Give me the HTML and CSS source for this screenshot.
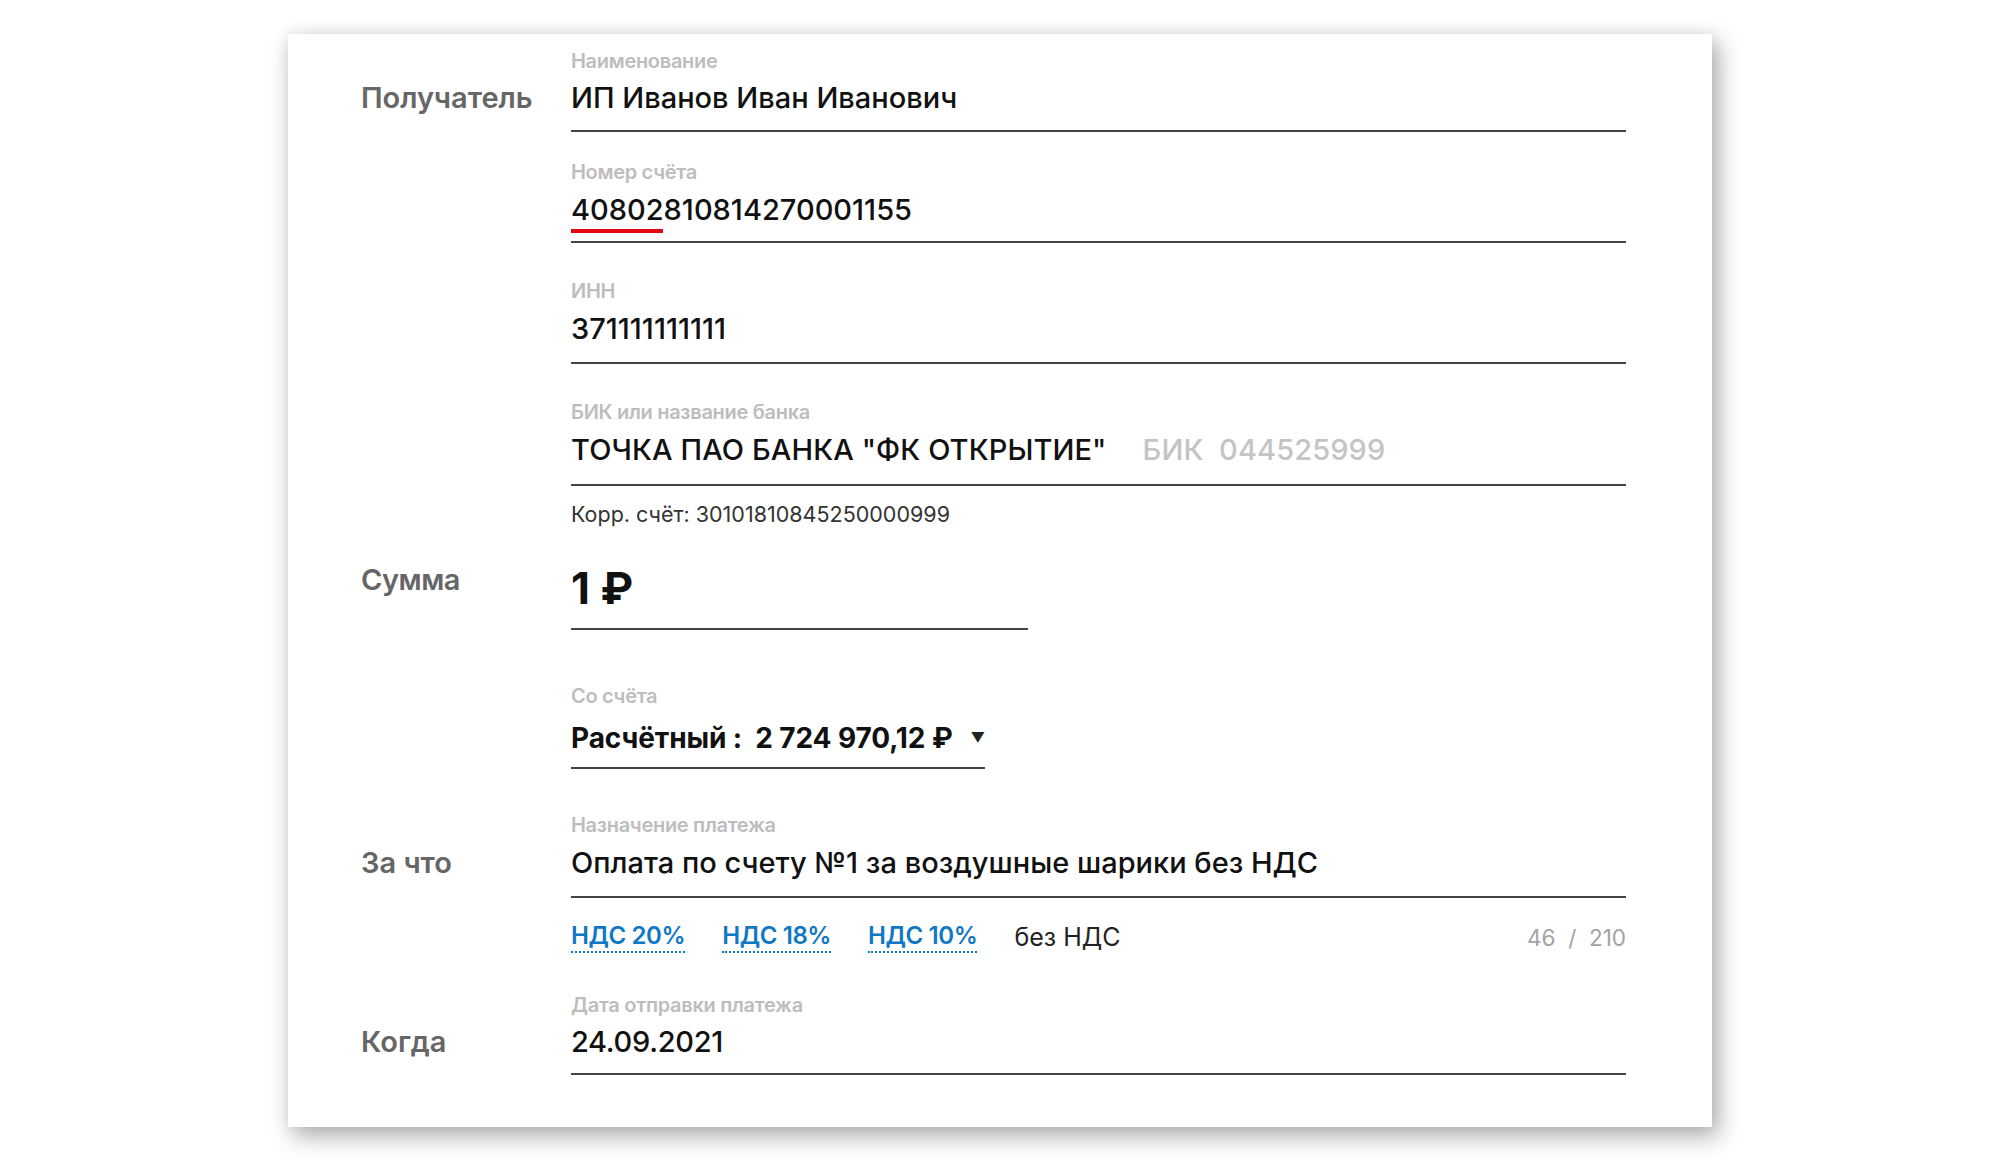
FILE: index.html
```html
<!DOCTYPE html>
<html lang="ru">
<head>
<meta charset="utf-8">
<title>Платёж</title>
<link rel="stylesheet" href="styles.css">
</head>
<body>
<div class="card">
  <div class="row row-recipient">
    <div class="side side-first">Получатель</div>
    <div class="fields">
      <div class="field f1">
        <div class="cap">Наименование</div>
        <div class="val">ИП Иванов Иван Иванович</div>
      </div>
      <div class="field f2">
        <div class="cap">Номер счёта</div>
        <div class="val val-acc">40802810814270001155<span class="err"></span></div>
      </div>
      <div class="field f3">
        <div class="cap">ИНН</div>
        <div class="val">371111111111</div>
      </div>
      <div class="field f4">
        <div class="cap">БИК или название банка</div>
        <div class="val">ТОЧКА ПАО БАНКА "ФК ОТКРЫТИЕ"<span class="bik">БИК&nbsp; 044525999</span></div>
      </div>
      <div class="korr">Корр. счёт: 30101810845250000999</div>
    </div>
  </div>

  <div class="row row-sum">
    <div class="side">Сумма</div>
    <div class="fields">
      <div class="field amount">
        <div class="val-big">1 ₽</div>
      </div>
      <div class="field from">
        <div class="cap">Со счёта</div>
        <div class="val val-from"><span>Расчётный :&nbsp; 2 724 970,12 ₽</span><span class="arrow">▼</span></div>
      </div>
    </div>
  </div>

  <div class="row row-purpose">
    <div class="side side-cap">За что</div>
    <div class="fields">
      <div class="field f-purpose">
        <div class="cap">Назначение платежа</div>
        <div class="val">Оплата по счету №1 за воздушные шарики без НДС</div>
      </div>
      <div class="vat">
        <div class="vat-opts">
          <a class="vat-link">НДС 20%</a>
          <a class="vat-link">НДС 18%</a>
          <a class="vat-link">НДС 10%</a>
          <span class="vat-none">без НДС</span>
        </div>
        <div class="counter">46&nbsp; /&nbsp; 210</div>
      </div>
    </div>
  </div>

  <div class="row row-date">
    <div class="side side-cap">Когда</div>
    <div class="fields">
      <div class="field f-date">
        <div class="cap">Дата отправки платежа</div>
        <div class="val">24.09.2021</div>
      </div>
    </div>
  </div>
</div>
</body>
</html>
```
FILE: styles.css
```css
html, body {
  margin: 0;
  padding: 0;
  background: #ffffff;
}
body {
  font-family: "Inter", "Noto Sans", "Liberation Sans", sans-serif;
  color: #111;
  padding: 34px 0 0 288px;
  min-height: 1160px;
  box-sizing: border-box;
}
.card {
  width: 1424px;
  height: 1093px;
  box-sizing: border-box;
  padding: 15px 86px 0 73px;
  background: #fff;
  box-shadow: 6px 9px 22px 1px rgba(0,0,0,0.30), 0 0 16px rgba(0,0,0,0.07);
}
.row {
  display: grid;
  grid-template-columns: 210px 1fr;
}
.side {
  font-size: 29px;
  line-height: 38px;
  font-weight: 600;
  color: #666;
}
.side-first, .side-cap {
  padding-top: 30px;
}
.row-purpose .side-cap { padding-top: 31px; }
.row-sum .side { letter-spacing: -0.5px; }
.field {
  border-bottom: 2px solid #444;
}
.cap {
  font-size: 20px;
  line-height: 24px;
  font-weight: 600;
  color: #bdbdbd;
  letter-spacing: -0.3px;
}
.val {
  font-size: 29px;
  line-height: 38px;
  font-weight: 500;
  color: #111;
  margin-top: 7px;
  white-space: nowrap;
}
.f1 { padding-bottom: 13px; }
.f1 .val { margin-top: 6px; }
.f2 { margin-top: 28px; padding-bottom: 12px; }
.f3 { margin-top: 36px; padding-bottom: 14px; }
.f4 { margin-top: 36px; padding-bottom: 15px; }
.f4 .val { letter-spacing: 0.1px; }
.val-acc { position: relative; }
.err {
  position: absolute;
  left: 0;
  top: 38px;
  width: 92px;
  height: 4px;
  background: #e30613;
}
.bik {
  color: #c4c4c4;
  margin-left: 36px;
}
.korr {
  margin-top: 15px;
  font-size: 21.5px;
  line-height: 26px;
  color: #333;
}
.row-sum { margin-top: 33px; }
.row-sum .side { padding-top: 1px; }
.amount {
  width: 457px;
  padding-bottom: 12px;
}
.val-big {
  font-size: 44px;
  line-height: 56px;
  font-weight: 700;
  color: #111;
}
.from {
  width: 414px;
  margin-top: 54px;
  padding-bottom: 10px;
}
.val-from {
  margin-top: 11px;
  font-size: 28px;
  font-weight: 700;
  letter-spacing: -0.1px;
  display: flex;
  justify-content: space-between;
  align-items: center;
}
.arrow {
  font-size: 14px;
  color: #222;
}
.row-purpose { margin-top: 44px; }
.f-purpose { padding-bottom: 14px; }
.vat {
  margin-top: 23px;
  display: flex;
  justify-content: space-between;
  align-items: center;
  height: 32px;
}
.vat-opts {
  display: flex;
  align-items: center;
  gap: 37px;
}
.vat-link {
  font-size: 24px;
  line-height: 30px;
  font-weight: 600;
  color: #0f78c6;
  border-bottom: 2px dotted #0f78c6;
  letter-spacing: -0.4px;
}
.vat-none {
  font-size: 25px;
  line-height: 30px;
  color: #222;
}
.counter {
  font-size: 22.5px;
  color: #a3a3a3;
}
.row-date { margin-top: 40px; }
.f-date { padding-bottom: 12px; }
.f-date .val { margin-top: 6px; letter-spacing: -0.3px; }
```
